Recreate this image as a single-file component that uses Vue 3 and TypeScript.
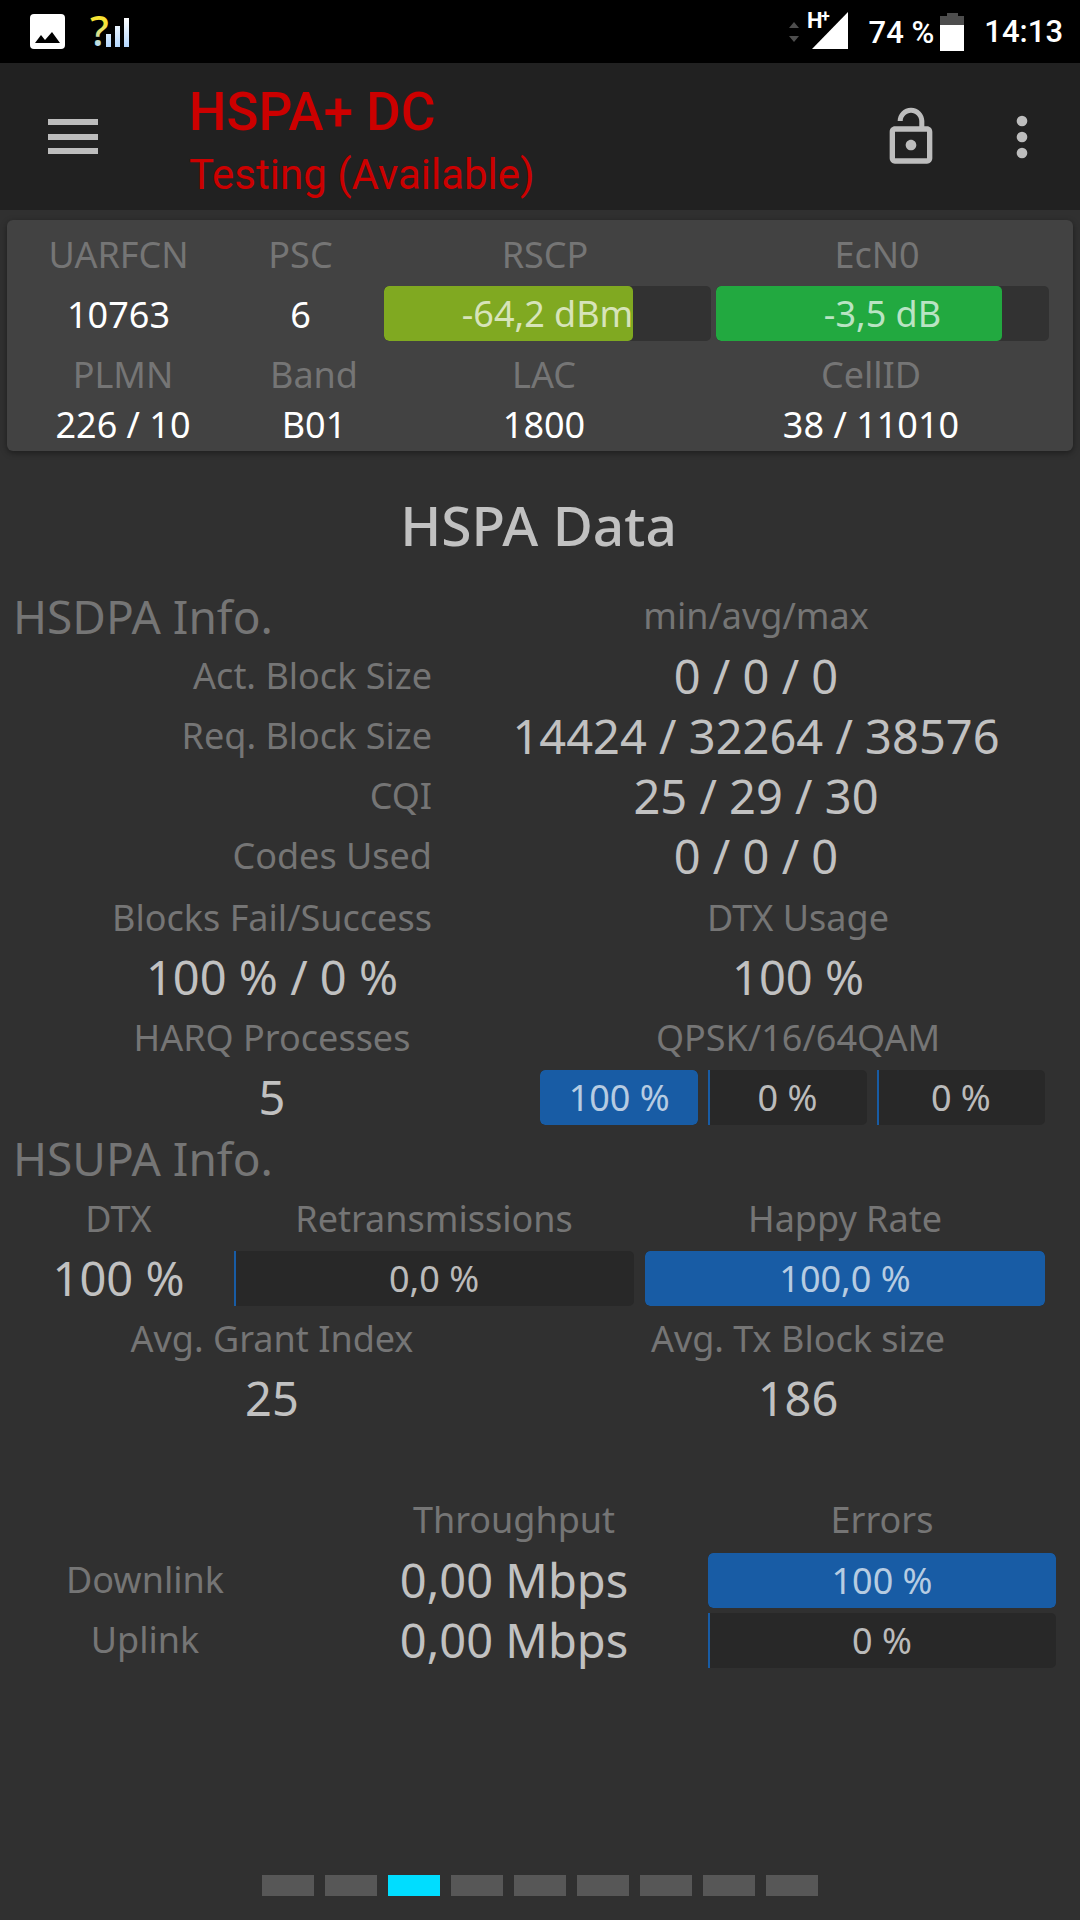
<script setup lang="ts">
import { h, ref } from 'vue'
import type { FunctionalComponent } from 'vue'

interface BarProps {
  value: string
  percent: number
  label: string
  tone?: 'blue' | 'olive' | 'green'
}

const Bar: FunctionalComponent<BarProps> = (props) =>
  h(
    'div',
    {
      class: ['bar', props.tone ?? 'blue', { empty: props.percent === 0 }],
      role: 'meter',
      'aria-label': props.label,
      'aria-valuenow': props.percent,
      'aria-valuemin': 0,
      'aria-valuemax': 100,
    },
    [
      h('span', { class: 'bar-fill', style: { width: props.percent + '%' } }),
      h('span', { class: 'bar-text' }, props.value),
    ],
  )
Bar.props = ['value', 'percent', 'label', 'tone']

const identity = [
  { label: 'PLMN', value: '226 / 10' },
  { label: 'Band', value: 'B01' },
  { label: 'LAC', value: '1800' },
  { label: 'CellID', value: '38 / 11010' },
]

const hsdpa = [
  { label: 'Act. Block Size', value: '0 / 0 / 0' },
  { label: 'Req. Block Size', value: '14424 / 32264 / 38576' },
  { label: 'CQI', value: '25 / 29 / 30' },
  { label: 'Codes Used', value: '0 / 0 / 0' },
]

const modulation = [
  { label: 'QPSK', value: '100 %', percent: 100 },
  { label: '16QAM', value: '0 %', percent: 0 },
  { label: '64QAM', value: '0 %', percent: 0 },
]

const links = [
  { label: 'Downlink', rate: '0,00 Mbps', errors: '100 %', percent: 100 },
  { label: 'Uplink', rate: '0,00 Mbps', errors: '0 %', percent: 0 },
]

const pageCount = 9
const page = ref(3)
</script>

<template>
  <div class="screen">
    <div class="status">
      <svg class="st-image" width="35" height="35" viewBox="0 0 35 35" aria-hidden="true">
        <rect width="35" height="35" rx="4" fill="#fff" />
        <path d="M5 29 11 21 15 26 22 18 30 29z" fill="#000" />
      </svg>
      <svg class="st-unknown" width="48" height="63" viewBox="0 0 48 63" aria-hidden="true">
        <defs>
          <linearGradient id="tip" x1="0" y1="0" x2="0" y2="1">
            <stop offset="0.4" stop-color="#f7e334" />
            <stop offset="0.8" stop-color="#b4dcff" />
          </linearGradient>
          <linearGradient id="ice" x1="0" y1="0" x2="0" y2="1">
            <stop offset="0" stop-color="#fff" />
            <stop offset="1" stop-color="#b4d8ff" />
          </linearGradient>
        </defs>
        <text x="6" y="46" class="question" fill="url(#tip)">?</text>
        <path d="M22 34h5v13h-5zM31 26h5v21h-5zM40 18h5v29h-5z" fill="url(#ice)" />
      </svg>
      <span class="grow"></span>
      <svg class="st-arrows" width="10" height="20" viewBox="0 0 10 20" aria-hidden="true">
        <path d="M0 6 5 0 10 6zM0 14h10l-5 6z" fill="#4d4d4d" />
      </svg>
      <svg class="st-signal" width="42" height="63" viewBox="0 0 42 63" aria-label="Mobile signal">
        <path d="M41 12V49H5z" fill="#fff" />
        <text x="0" y="28" class="net">H</text>
        <text x="14" y="22" class="net-plus">+</text>
      </svg>
      <span class="st-text battery-text">74 %</span>
      <svg class="st-battery" width="24" height="38" viewBox="0 0 24 38" aria-hidden="true">
        <path d="M7 0h11v3h6v9H0V3h7z" fill="#4d4d4d" />
        <path d="M0 12h24v26H0z" fill="#fff" />
      </svg>
      <span class="st-text clock">14:13</span>
    </div>

    <header class="toolbar">
      <button class="icon-btn menu" type="button" aria-label="Menu">
        <svg width="50" height="35" viewBox="0 0 50 35">
          <path d="M0 0h50v6H0zM0 15h50v6H0zM0 29h50v6H0z" fill="#bdbdbd" />
        </svg>
      </button>
      <div class="titles">
        <h1>HSPA+ DC</h1>
        <p>Testing (Available)</p>
      </div>
      <button class="icon-btn lock" type="button" aria-label="Unlocked">
        <svg width="64" height="64" viewBox="0 0 24 24">
          <path
            fill="#bdbdbd"
            d="M12 17c1.100 0 2-.9 2-2s-.9-2-2-2-2 .9-2 2 .9 2 2 2zm6-9h-1V6c0-2.760-2.240-5-5-5S7 3.240 7 6h1.900c0-1.710 1.390-3.100 3.100-3.100 1.710 0 3.100 1.390 3.100 3.100v2H6c-1.100 0-2 .9-2 2v10c0 1.100.9 2 2 2h12c1.100 0 2-.9 2-2V10c0-1.100-.9-2-2-2zm0 12H6V10h12v10z"
          />
        </svg>
      </button>
      <button class="icon-btn more" type="button" aria-label="More options">
        <svg width="64" height="64" viewBox="0 0 24 24" fill="#bdbdbd">
          <circle cx="12" cy="6" r="2" />
          <circle cx="12" cy="12" r="2" />
          <circle cx="12" cy="18" r="2" />
        </svg>
      </button>
    </header>

    <section class="card">
      <div class="card-row signal-labels label">
        <span>UARFCN</span><span>PSC</span><span>RSCP</span><span>EcN0</span>
      </div>
      <div class="card-row signal-values">
        <span>10763</span>
        <span>6</span>
        <Bar label="RSCP" value="-64,2 dBm" :percent="76" tone="olive" />
        <Bar label="EcN0" value="-3,5 dB" :percent="86" tone="green" />
      </div>
      <div class="card-row identity label">
        <span v-for="item in identity" :key="item.label">{{ item.label }}</span>
      </div>
      <div class="card-row identity identity-values">
        <span v-for="item in identity" :key="item.label">{{ item.value }}</span>
      </div>
    </section>

    <main>
      <h2>HSPA Data</h2>

      <table class="stats">
        <thead>
          <tr>
            <th class="section-title">HSDPA Info.</th>
            <th class="label">min/avg/max</th>
          </tr>
        </thead>
        <tbody>
          <tr v-for="row in hsdpa" :key="row.label">
            <th class="label side">{{ row.label }}</th>
            <td class="value">{{ row.value }}</td>
          </tr>
        </tbody>
      </table>

      <section class="group">
        <div class="halves">
          <span class="label">Blocks Fail/Success</span>
          <span class="label">DTX Usage</span>
          <span class="value">100 % / 0 %</span>
          <span class="value">100 %</span>
          <span class="label">HARQ Processes</span>
          <span class="label">QPSK/16/64QAM</span>
          <span class="value">5</span>
          <div class="modulation">
            <Bar
              v-for="m in modulation"
              :key="m.label"
              :label="m.label"
              :value="m.value"
              :percent="m.percent"
            />
          </div>
        </div>
      </section>

      <section class="group">
        <h3 class="section-title">HSUPA Info.</h3>
        <div class="thirds">
          <span class="label">DTX</span>
          <span class="label">Retransmissions</span>
          <span class="label">Happy Rate</span>
          <span class="value">100 %</span>
          <Bar label="Retransmissions" value="0,0 %" :percent="0" />
          <Bar label="Happy Rate" value="100,0 %" :percent="100" />
        </div>
        <div class="halves">
          <span class="label">Avg. Grant Index</span>
          <span class="label">Avg. Tx Block size</span>
          <span class="value">25</span>
          <span class="value">186</span>
        </div>
      </section>

      <table class="links">
        <thead>
          <tr>
            <td></td>
            <th class="label">Throughput</th>
            <th class="label">Errors</th>
          </tr>
        </thead>
        <tbody>
          <tr v-for="link in links" :key="link.label">
            <th class="label name">{{ link.label }}</th>
            <td class="value">{{ link.rate }}</td>
            <td><Bar :label="link.label + ' errors'" :value="link.errors" :percent="link.percent" /></td>
          </tr>
        </tbody>
      </table>
    </main>

    <nav class="pager" aria-label="Pages">
      <button
        v-for="n in pageCount"
        :key="n"
        type="button"
        :class="{ current: n === page }"
        :aria-label="'Page ' + n"
        @click="page = n"
      ></button>
    </nav>
  </div>
</template>

<style>
body {
  margin: 0;
  background: #303030;
}
</style>

<style scoped>
.screen {
  display: flex;
  flex-direction: column;
  min-height: 100vh;
  background: #303030;
  color: #c1c1c1;
  font-family: 'Noto Sans', 'Open Sans', sans-serif;
  font-size: 36px;
}

h1,
h2,
h3,
p {
  margin: 0;
  font-weight: 400;
}

/* Status bar */
.status {
  display: flex;
  align-items: center;
  box-sizing: border-box;
  height: 63px;
  padding: 0 17px 0 30px;
  background: #000;
  color: #fff;
  font-family: Roboto, sans-serif;
}
.st-unknown {
  margin-left: 19px;
}
.question {
  font: 500 42px 'Noto Sans', sans-serif;
}
.grow {
  flex: 1;
}
.st-signal {
  margin-left: 8px;
}
.net {
  font: 700 22px Roboto, sans-serif;
  fill: #fff;
}
.net-plus {
  font: 700 16px Roboto, sans-serif;
  fill: #fff;
}
.st-text {
  font-size: 31px;
  font-weight: 500;
  line-height: 36px;
}
.battery-text {
  margin: 2px 6px 0 20px;
}
.clock {
  margin-left: 20px;
}

/* App bar */
.toolbar {
  display: flex;
  align-items: center;
  height: 147px;
  background: #212121;
}
.icon-btn {
  display: flex;
  padding: 0;
  border: 0;
  background: none;
}
.menu {
  margin-left: 48px;
}
.titles {
  flex: 1;
  margin-left: 91px;
  padding-top: 10px;
  color: #cc0000;
  font-family: Roboto, sans-serif;
}
.titles h1 {
  font-size: 53px;
  font-weight: 500;
  line-height: 66px;
}
.titles p {
  font-size: 42px;
  line-height: 60px;
}
.more {
  margin: 0 26px 0 47px;
}

/* Serving cell card */
.card {
  margin: 10px 7px 0;
  padding-bottom: 10px;
  border-radius: 6px;
  background: #424242;
  box-shadow: 0 2px 6px rgba(0, 0, 0, 0.4);
  color: #fff;
}
.card-row {
  display: grid;
  align-items: center;
  height: 65px;
  line-height: 65px;
  text-align: center;
  white-space: nowrap;
}
.card-row span {
  padding-top: 2px;
}
.signal-labels {
  grid-template-columns: 197fr 157fr 322fr 332fr;
  column-gap: 5px;
  padding: 0 30px 0 13px;
}
.signal-values {
  grid-template-columns: 197fr 157fr 327fr 333fr;
  column-gap: 5px;
  height: 55px;
  padding: 0 24px 0 13px;
  line-height: 55px;
}
.identity {
  grid-template-columns: 206fr 176fr 284fr 370fr;
  padding: 0 17px 0 13px;
}
.identity-values {
  height: 36px;
  line-height: 36px;
}

/* Text roles */
.label {
  color: #757575;
  font-size: 36px;
  font-weight: 400;
}
.value {
  font-size: 47px;
}
.section-title {
  padding-left: 13px;
  color: #757575;
  font-size: 46px;
  line-height: 60px;
  font-weight: 400;
}

/* Bars */
:deep(.bar) {
  display: grid;
  align-items: center;
  height: 55px;
  border-radius: 5px;
  overflow: hidden;
  background: #282828;
  color: rgba(255, 255, 255, 0.7);
  font-size: 36px;
  line-height: 55px;
  text-align: center;
  white-space: nowrap;
}
.card :deep(.bar) {
  background: #323232;
}
:deep(.bar-fill),
:deep(.bar-text) {
  grid-area: 1 / 1;
}
:deep(.bar-fill) {
  min-width: 2px;
  height: 55px;
  border-radius: 5px;
  background: #185ca5;
}
:deep(.bar.empty) {
  border-radius: 0 5px 5px 0;
}
:deep(.bar.empty .bar-fill) {
  border-radius: 0;
}
:deep(.bar.olive .bar-fill) {
  background: #80a921;
}
:deep(.bar.green .bar-fill) {
  background: #22a940;
}

/* Measurements */
h2 {
  padding: 34px 3px 21px 0;
  font-size: 55px;
  font-weight: 500;
  line-height: 80px;
  text-align: center;
}
table,
thead,
tbody {
  display: block;
}
th,
td {
  padding: 0;
}
tr {
  display: grid;
  align-items: center;
  height: 60px;
  text-align: center;
  line-height: 60px;
  white-space: nowrap;
}
.stats tr {
  grid-template-columns: 2fr 3fr;
}
.stats .section-title {
  text-align: left;
}
.stats .side {
  text-align: right;
}
.group {
  margin-top: 1px;
}
.halves,
.thirds {
  display: grid;
  grid-auto-rows: 60px;
  align-items: center;
  text-align: center;
  white-space: nowrap;
}
.halves {
  grid-template-columns: 536fr 516fr;
  padding: 0 24px 0 4px;
}
.thirds {
  grid-template-columns: 209fr 400fr 400fr;
  column-gap: 11px;
  padding: 0 35px 0 14px;
}
.modulation {
  display: grid;
  grid-template-columns: 158fr 158fr 168fr;
  column-gap: 10px;
  margin-right: 11px;
}
.links {
  margin: 62px 24px 0 0;
}
.links tr {
  grid-template-columns: 320fr 388fr 348fr;
}
.links .name {
  padding-right: 30px;
}

/* Page indicator */
.pager {
  display: flex;
  justify-content: center;
  gap: 11px;
  margin-top: auto;
  padding: 24px 0;
}
.pager button {
  width: 52px;
  height: 21px;
  padding: 0;
  border: 0;
  background: #575757;
}
.pager .current {
  background: #00ddff;
}
</style>
